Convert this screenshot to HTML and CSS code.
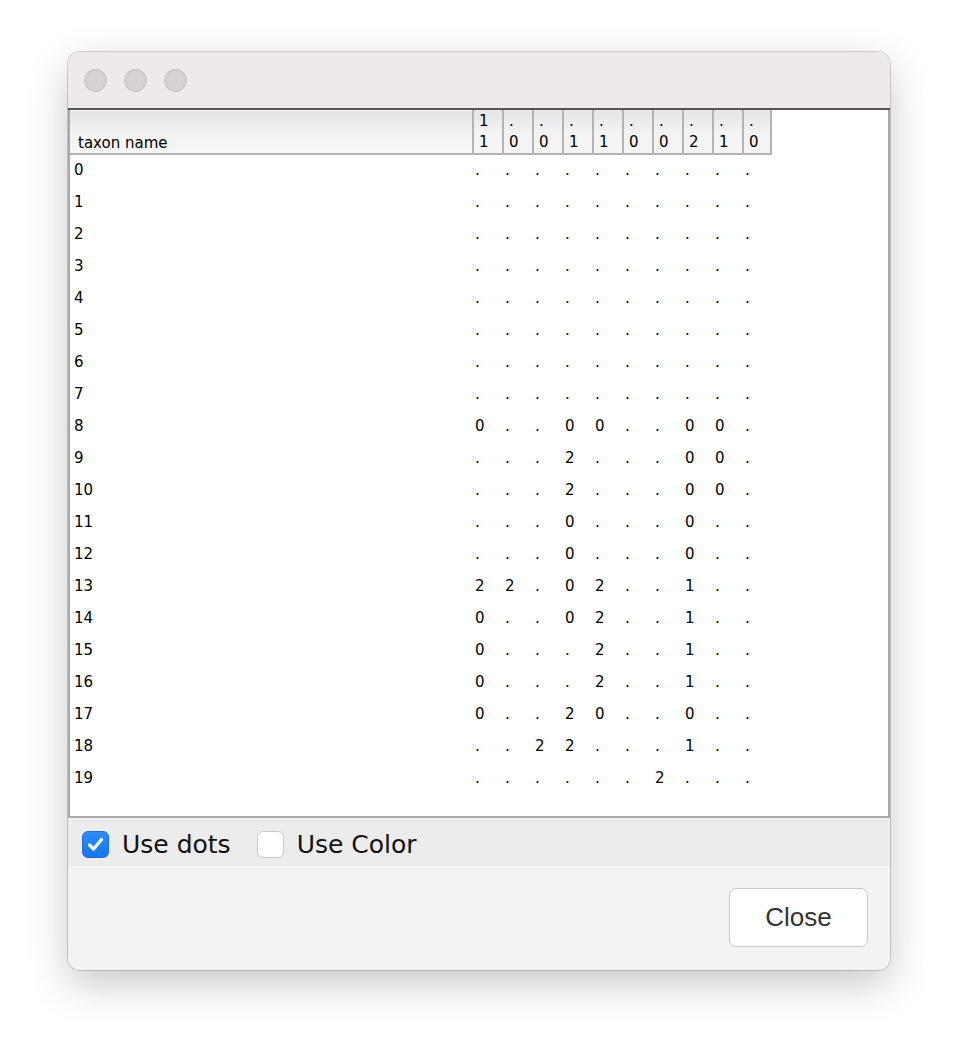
FILE: index.html
```html
<!DOCTYPE html>
<html>
<head>
<meta charset="utf-8">
<link rel="stylesheet" href="styles.css">
</head>
<body>
<div class="window">
  <div class="titlebar">
    <span class="light"></span><span class="light"></span><span class="light"></span>
  </div>
  <div class="pane">
    <div class="row head">
      <div class="hname">taxon name</div>
      <div class="hcol">1<br>1</div>
      <div class="hcol">.<br>0</div>
      <div class="hcol">.<br>0</div>
      <div class="hcol">.<br>1</div>
      <div class="hcol">.<br>1</div>
      <div class="hcol">.<br>0</div>
      <div class="hcol">.<br>0</div>
      <div class="hcol">.<br>2</div>
      <div class="hcol">.<br>1</div>
      <div class="hcol">.<br>0</div>
    </div>
    <div id="rows"></div>
  </div>
  <div class="options">
    <label class="opt"><span class="cb on"><svg width="17" height="15" viewBox="0 0 17 15"><path d="M2.5 8 L6.5 12 L14.5 2.5" fill="none" stroke="#fff" stroke-width="3.2" stroke-linecap="round" stroke-linejoin="round"/></svg></span>Use dots</label>
    <label class="opt"><span class="cb"></span>Use Color</label>
  </div>
  <div class="footer">
    <button class="btn">Close</button>
  </div>
</div>
<script src="app.js"></script>
</body>
</html>
```

FILE: app.js
```js
var data = [
  "..........",
  "..........",
  "..........",
  "..........",
  "..........",
  "..........",
  "..........",
  "..........",
  "0..00..00.",
  "...2...00.",
  "...2...00.",
  "...0...0..",
  "...0...0..",
  "22.02..1..",
  "0..02..1..",
  "0...2..1..",
  "0...2..1..",
  "0..20..0..",
  "..22...1..",
  "......2..."
];
var host = document.getElementById('rows');
data.forEach(function (s, i) {
  var r = document.createElement('div');
  r.className = 'row';
  var n = document.createElement('div');
  n.className = 'name';
  n.textContent = String(i);
  r.appendChild(n);
  for (var k = 0; k < s.length; k++) {
    var c = document.createElement('div');
    c.className = 'cell';
    c.textContent = s[k];
    r.appendChild(c);
  }
  host.appendChild(r);
});
```

FILE: styles.css
```css
* {
  box-sizing: border-box;
}
html, body {
  margin: 0;
  background: #ffffff;
  min-height: 1054px;
}
body {
  padding: 52px 0 0 68px;
  font-family: "DejaVu Sans", sans-serif;
}
.window {
  width: 822px;
  height: 918px;
  border-radius: 12px;
  overflow: hidden;
  background: #f3f3f3;
  box-shadow: 0 0 0 1px rgba(0,0,0,0.16), 0 14px 40px rgba(0,0,0,0.22);
  display: flex;
  flex-direction: column;
}
.titlebar {
  height: 58px;
  background: #efeaea;
  border-bottom: 2px solid #545454;
  display: flex;
  align-items: center;
  gap: 17px;
  padding-left: 16px;
  flex: none;
}
.light {
  width: 23px;
  height: 23px;
  border-radius: 50%;
  background: #d6d1d1;
  border: 1px solid #c3bebe;
}
.pane {
  height: 708px;
  background: #fff;
  border-left: 2px solid #a8a8a8;
  border-right: 2px solid #a8a8a8;
  border-bottom: 2px solid #a8a8a8;
  flex: none;
  font-size: 15px;
  color: #000;
}
.row {
  display: grid;
  grid-template-columns: 402px repeat(10, 30px);
  height: 32px;
  align-items: center;
}
.row.head {
  height: 44px;
  align-items: stretch;
}
.hname {
  background: linear-gradient(#e3e3e3, #f3f3f3 55%, #f7f7f7);
  border-top: 1px solid #fafafa;
  border-bottom: 2px solid #b4b4b4;
  display: flex;
  align-items: flex-end;
  padding: 0 0 0 8px;
  line-height: 20px;
}
.hcol {
  background: linear-gradient(#e6e6e6, #f3f3f3 55%, #f5f5f5);
  border-left: 2px solid #b4b4b4;
  border-bottom: 2px solid #b4b4b4;
  padding: 1px 0 0 5px;
  line-height: 21px;
}
.hcol:last-child {
  border-right: 2px solid #b4b4b4;
}
.name {
  padding-left: 4px;
}
.cell {
  padding-left: 3px;
}
.options {
  height: 48px;
  background: #ececec;
  border-top: 1px solid #f8f8f8;
  display: flex;
  align-items: center;
  padding: 4px 0 0 14px;
  gap: 26px;
  flex: none;
  font-family: "DejaVu Sans", sans-serif;
  font-size: 25px;
  color: #111;
}
.opt {
  display: flex;
  align-items: center;
  gap: 13px;
}
.cb {
  width: 27px;
  height: 27px;
  border-radius: 6px;
  background: #fff;
  border: 1px solid #c8c8c8;
  display: flex;
  align-items: center;
  justify-content: center;
}
.cb.on {
  background: linear-gradient(#2d8cfb, #1574f0);
  border-color: #1a6fe0;
}
.footer {
  flex: 1;
  background: #f3f3f3;
  display: flex;
  justify-content: flex-end;
  align-items: flex-start;
  padding: 22px 22px 0 0;
}
.btn {
  width: 139px;
  height: 59px;
  background: #fff;
  border: 1px solid #c8c8c8;
  border-radius: 7px;
  font-family: "Liberation Sans", Arial, sans-serif;
  font-size: 26px;
  color: #333;
  padding: 0;
}
```
